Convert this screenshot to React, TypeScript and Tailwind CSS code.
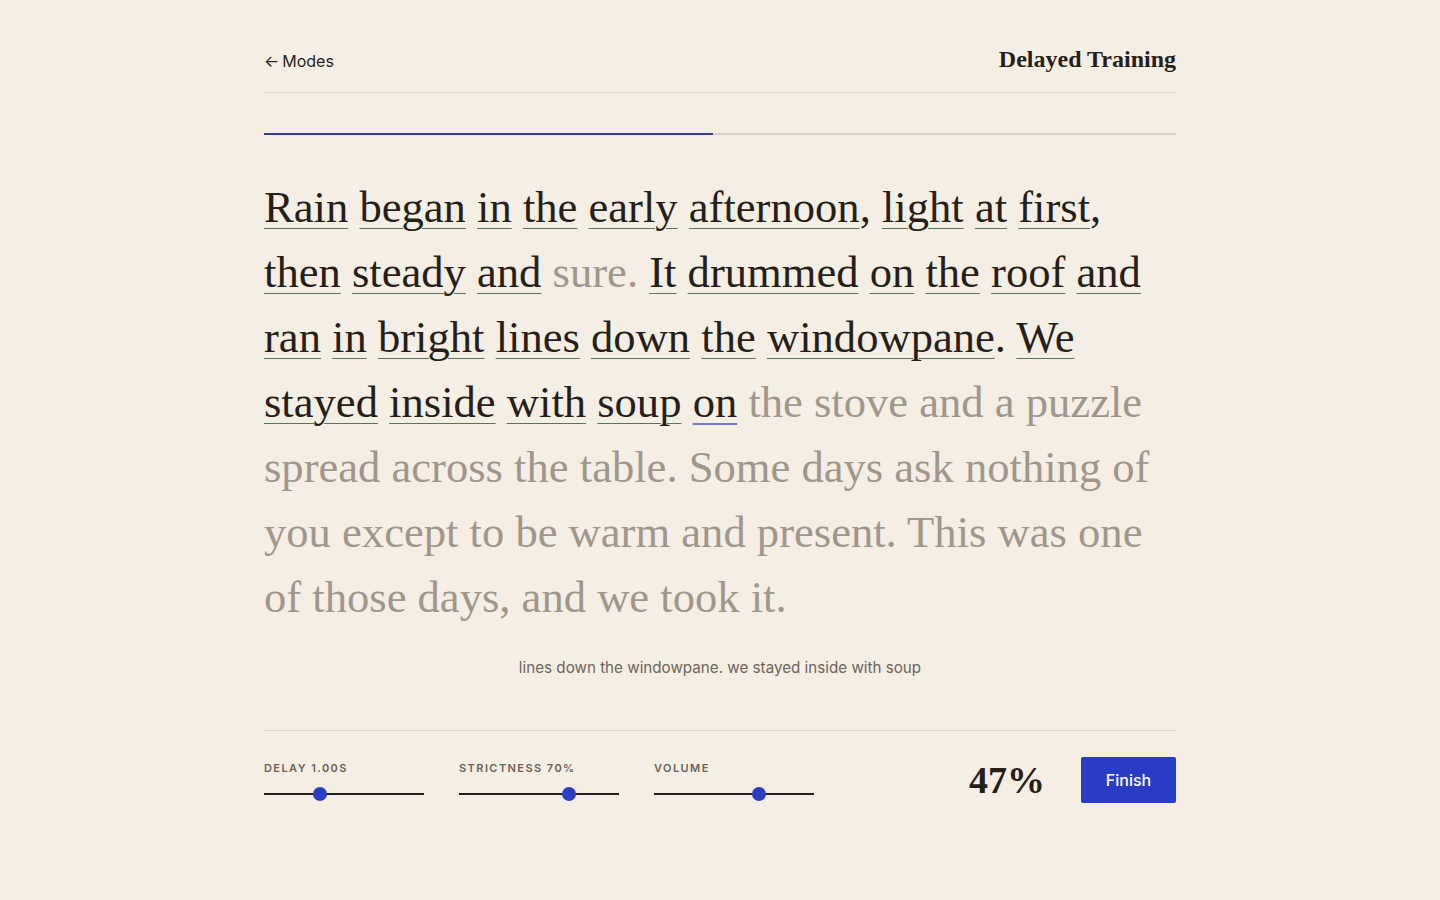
import React from "react";

type Word = { t: string; p?: string; s: "read" | "missed" | "current" | "pending" };

const lines: Word[][] = [
  [
    { t: "Rain", s: "read" },
    { t: "began", s: "read" },
    { t: "in", s: "read" },
    { t: "the", s: "read" },
    { t: "early", s: "read" },
    { t: "afternoon", p: ",", s: "read" },
    { t: "light", s: "read" },
    { t: "at", s: "read" },
    { t: "first", p: ",", s: "read" },
  ],
  [
    { t: "then", s: "read" },
    { t: "steady", s: "read" },
    { t: "and", s: "read" },
    { t: "sure", p: ".", s: "missed" },
    { t: "It", s: "read" },
    { t: "drummed", s: "read" },
    { t: "on", s: "read" },
    { t: "the", s: "read" },
    { t: "roof", s: "read" },
    { t: "and", s: "read" },
  ],
  [
    { t: "ran", s: "read" },
    { t: "in", s: "read" },
    { t: "bright", s: "read" },
    { t: "lines", s: "read" },
    { t: "down", s: "read" },
    { t: "the", s: "read" },
    { t: "windowpane", p: ".", s: "read" },
    { t: "We", s: "read" },
  ],
  [
    { t: "stayed", s: "read" },
    { t: "inside", s: "read" },
    { t: "with", s: "read" },
    { t: "soup", s: "read" },
    { t: "on", s: "current" },
    { t: "the stove and a puzzle", s: "pending" },
  ],
  [{ t: "spread across the table. Some days ask nothing of", s: "pending" }],
  [{ t: "you except to be warm and present. This was one", s: "pending" }],
  [{ t: "of those days, and we took it.", s: "pending" }],
];

function WordSpan({ w }: { w: Word }) {
  if (w.s === "pending" || w.s === "missed") {
    return (
      <span className="text-[#a0978c]">
        {w.t}
        {w.p}
      </span>
    );
  }
  return (
    <span className="text-[#261f19]">
      <span
        className={
          w.s === "current"
            ? "underline decoration-[#6c7bd0] decoration-2 underline-offset-[6px]"
            : "underline decoration-[#58775a] decoration-1 underline-offset-[6px]"
        }
      >
        {w.t}
      </span>
      {w.p}
    </span>
  );
}

function Slider({ label, pct }: { label: string; pct: number }) {
  return (
    <div className="w-[160px]">
      <div className="text-[11px] font-semibold tracking-[0.13em] uppercase text-[#6b6258] leading-4">
        {label}
      </div>
      <div className="relative mt-[17px] h-[2px] bg-[#261f19]">
        <div
          className="absolute top-1/2 w-[14px] h-[14px] -mt-[7px] -ml-[7px] rounded-full bg-[#2a3ec4]"
          style={{ left: `${pct}%` }}
        />
      </div>
    </div>
  );
}

export default function App() {
  return (
    <div
      className="min-h-screen bg-[#f5eee4]"
      style={{ fontFamily: "Inter, 'Noto Sans', sans-serif" }}
    >
      <div className="max-w-[912px] mx-auto">
        <header className="h-[93px] pt-[27px] flex items-center justify-between border-b border-[#ddd5ca]">
          <a className="text-[16px] text-[#261f19] flex items-center gap-[3px] mt-[2px]">
            <span className="text-[16px]">←</span>
            <span>Modes</span>
          </a>
          <h1 className="text-[24px] font-bold text-[#261f19] font-['Liberation_Serif',serif] -mt-[1px]">
            Delayed Training
          </h1>
        </header>

        <div className="mt-[40px] flex h-[2px]">
          <div className="w-[49.2%] bg-[#2f3d9c]" />
          <div className="flex-1 bg-[#d9d1c6]" />
        </div>

        <div className="mt-[40px] text-[44.6px] leading-[65px] font-['Liberation_Serif',serif]">
          {lines.map((line, i) => (
            <div key={i} className="whitespace-nowrap">
              {line.map((w, j) => (
                <React.Fragment key={j}>
                  {j > 0 && " "}
                  <WordSpan w={w} />
                </React.Fragment>
              ))}
            </div>
          ))}
        </div>

        <p className="mt-[27px] text-center text-[15.2px] leading-[22px] text-[#6e655b]">
          lines down the windowpane. we stayed inside with soup
        </p>

        <div className="mt-[51px] border-t border-[#ddd5ca] pt-[21px] flex items-center">
          <div className="flex gap-[35px]">
            <Slider label="Delay 1.00s" pct={35} />
            <Slider label="Strictness 70%" pct={68.5} />
            <Slider label="Volume" pct={65.5} />
          </div>
          <div className="ml-auto flex items-center gap-[36px] mt-[5px]">
            <span className="text-[38px] font-bold text-[#261f19] font-['Liberation_Serif',serif] leading-none">
              47%
            </span>
            <button className="w-[95px] h-[46px] rounded-[2px] bg-[#2a3cc4] text-white text-[16px] font-medium">
              Finish
            </button>
          </div>
        </div>
      </div>
    </div>
  );
}
